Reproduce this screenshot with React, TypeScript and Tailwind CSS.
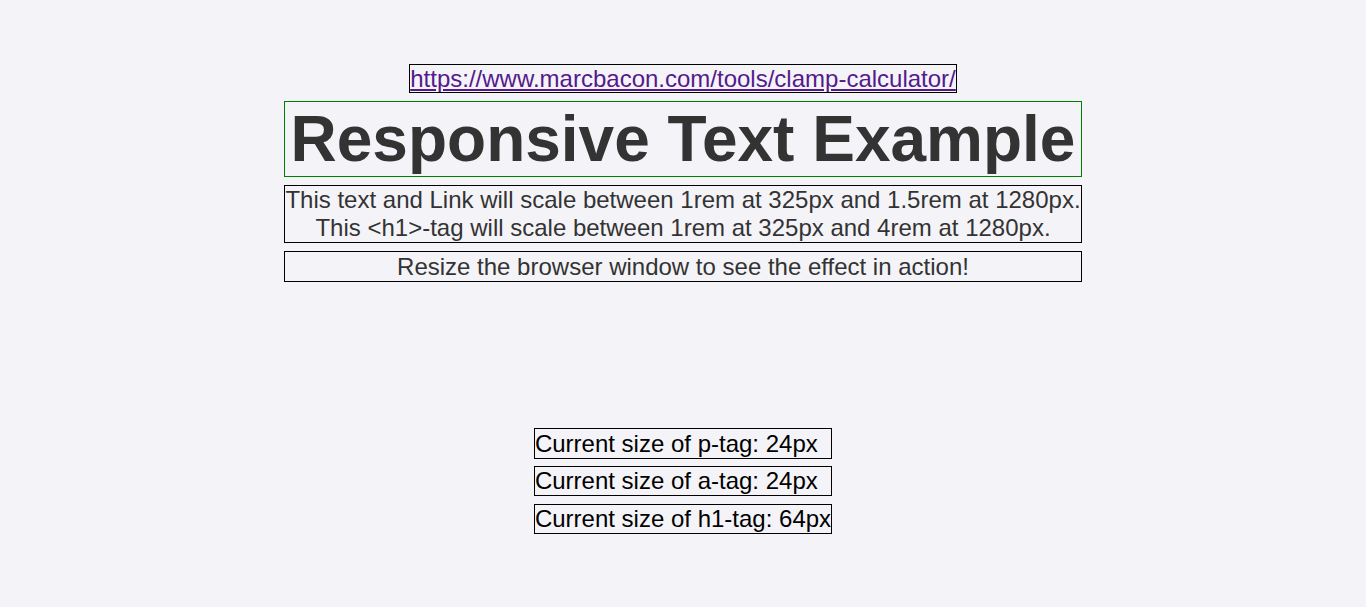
export default function App() {
  return (
    <div
      className="min-h-[607px] bg-[#f4f4f8] pt-[64px] text-[#333]"
      style={{ fontFamily: '"Liberation Sans", Arial, sans-serif' }}
    >
      <div className="flex flex-col items-center">
        <a
          href="#"
          className="border border-black text-[24px] leading-[27px] text-[#551a8b] underline"
        >
          https://www.marcbacon.com/tools/clamp-calculator/
        </a>
        <div className="mt-2 flex w-fit flex-col gap-2">
          <h1 className="border border-[#008000] text-center text-[64px] font-bold leading-[74px]">
            Responsive Text Example
          </h1>
          <p className="border border-black text-center text-[24px] leading-[28px]">
            This text and Link will scale between 1rem at 325px and 1.5rem at 1280px.
            <br />
            This &lt;h1&gt;-tag will scale between 1rem at 325px and 4rem at 1280px.
          </p>
          <p className="border border-black text-center text-[24px] leading-[29px]">
            Resize the browser window to see the effect in action!
          </p>
        </div>
        <div className="mt-[146px] flex w-fit flex-col text-black">
          <p className="border border-black pr-[12px] text-[24px] leading-[29px]">
            Current size of p-tag: 24px
          </p>
          <p className="mt-[7px] border border-black text-[24px] leading-[28px]">
            Current size of a-tag: 24px
          </p>
          <p className="mt-2 border border-black text-[24px] leading-[28px]">
            Current size of h1-tag: 64px
          </p>
        </div>
      </div>
    </div>
  );
}
